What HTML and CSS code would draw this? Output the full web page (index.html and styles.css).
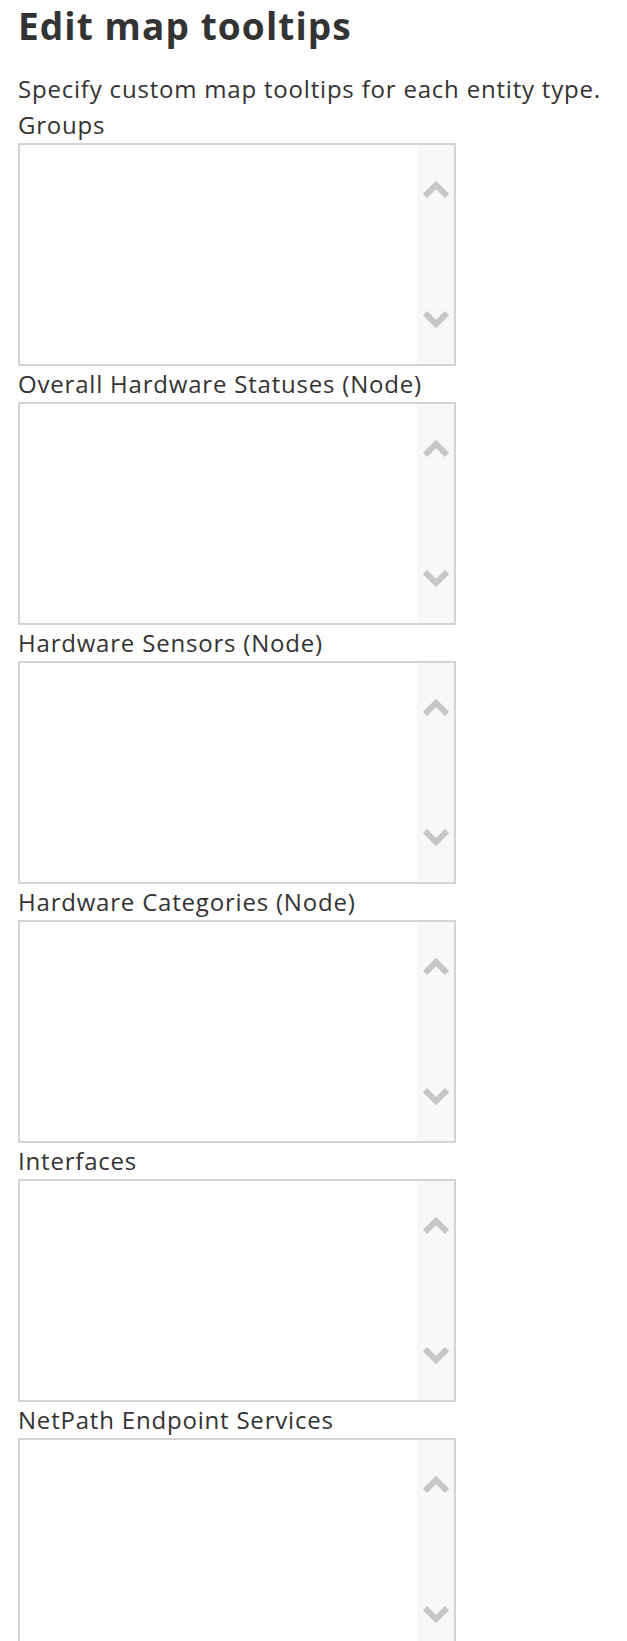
FILE: index.html
```html
<!DOCTYPE html>
<html>
<head>
<meta charset="utf-8">
<link rel="stylesheet" href="styles.css">
</head>
<body>
<div class="page">
  <h1 class="title">Edit map tooltips</h1>
  <p class="desc">Specify custom map tooltips for each entity type.</p>
  <div class="field">
    <div class="label">Groups</div>
    <div class="box"><div class="area"></div><div class="scroll"><svg class="chev" viewBox="0 0 26 20"><polyline points="2,17 13,6 24,17"/></svg><svg class="chev" viewBox="0 0 26 20"><polyline points="2,3 13,14 24,3"/></svg></div></div>
  </div>
  <div class="field">
    <div class="label">Overall Hardware Statuses (Node)</div>
    <div class="box"><div class="area"></div><div class="scroll"><svg class="chev" viewBox="0 0 26 20"><polyline points="2,17 13,6 24,17"/></svg><svg class="chev" viewBox="0 0 26 20"><polyline points="2,3 13,14 24,3"/></svg></div></div>
  </div>
  <div class="field">
    <div class="label">Hardware Sensors (Node)</div>
    <div class="box"><div class="area"></div><div class="scroll"><svg class="chev" viewBox="0 0 26 20"><polyline points="2,17 13,6 24,17"/></svg><svg class="chev" viewBox="0 0 26 20"><polyline points="2,3 13,14 24,3"/></svg></div></div>
  </div>
  <div class="field">
    <div class="label">Hardware Categories (Node)</div>
    <div class="box"><div class="area"></div><div class="scroll"><svg class="chev" viewBox="0 0 26 20"><polyline points="2,17 13,6 24,17"/></svg><svg class="chev" viewBox="0 0 26 20"><polyline points="2,3 13,14 24,3"/></svg></div></div>
  </div>
  <div class="field">
    <div class="label">Interfaces</div>
    <div class="box"><div class="area"></div><div class="scroll"><svg class="chev" viewBox="0 0 26 20"><polyline points="2,17 13,6 24,17"/></svg><svg class="chev" viewBox="0 0 26 20"><polyline points="2,3 13,14 24,3"/></svg></div></div>
  </div>
  <div class="field">
    <div class="label">NetPath Endpoint Services</div>
    <div class="box"><div class="area"></div><div class="scroll"><svg class="chev" viewBox="0 0 26 20"><polyline points="2,17 13,6 24,17"/></svg><svg class="chev" viewBox="0 0 26 20"><polyline points="2,3 13,14 24,3"/></svg></div></div>
  </div>
</div>
</body>
</html>
```

FILE: styles.css
```css
html, body {
  margin: 0;
  padding: 0;
  background: #ffffff;
}
body {
  font-family: "Open Sans", "Noto Sans", sans-serif;
  color: #333333;
  font-size: 24px;
  line-height: 36px;
  letter-spacing: 0.8px;
}
.page {
  padding: 0 18px;
}
.title {
  margin: 0;
  padding-top: 1px;
  font-size: 37px;
  line-height: 50px;
  font-weight: 700;
  letter-spacing: 1.1px;
  color: #333333;
  height: 71px;
  box-sizing: border-box;
}
.desc {
  margin: 0;
}
.label {
  height: 36px;
}
.box {
  width: 438px;
  height: 223px;
  box-sizing: border-box;
  border: 2px solid #d4d4d4;
  display: flex;
  background: #ffffff;
}
.area {
  flex: 1;
}
.scroll {
  width: 37px;
  background: #f8f8f8;
  display: flex;
  flex-direction: column;
  justify-content: space-between;
  align-items: center;
  padding: 34px 0;
}
.chev {
  width: 26px;
  height: 20px;
  display: block;
}
.chev polyline {
  fill: none;
  stroke: #c6c6c6;
  stroke-width: 6;
  stroke-linejoin: miter;
}
```
